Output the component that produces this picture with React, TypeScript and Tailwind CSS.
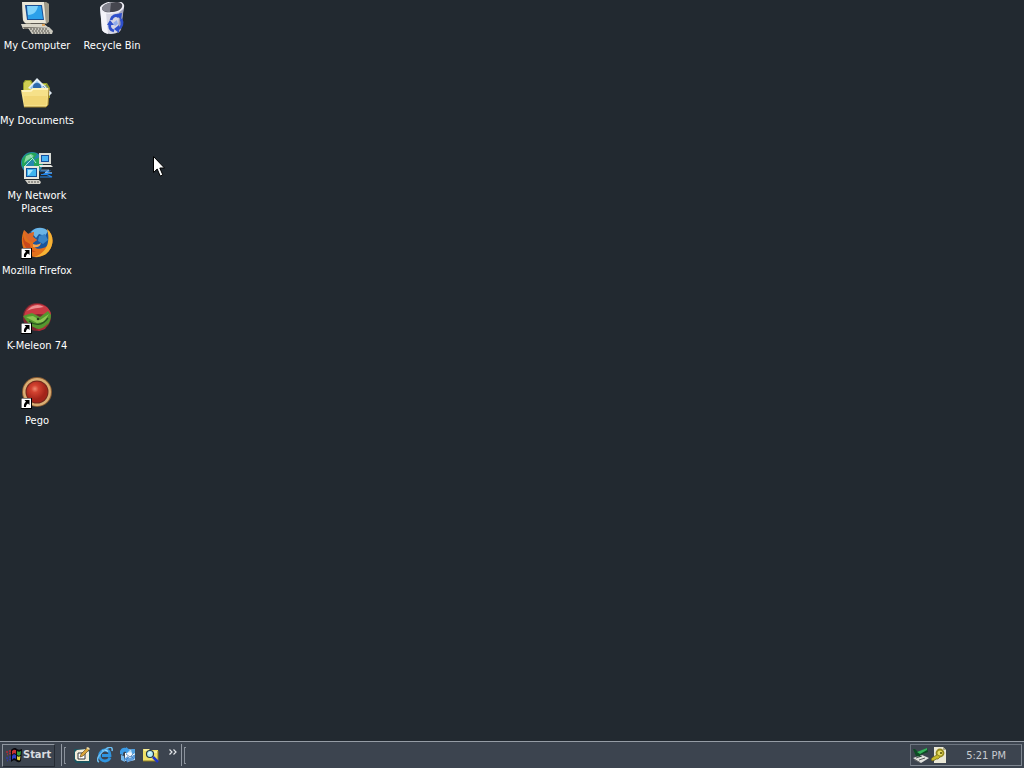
import type { ReactNode } from 'react';

function ShortcutArrow() {
  return (
    <g>
      <path d="M0 21h11v11H0z" fill="#000" />
      <path d="M.5 21.500h9.500v9.500H.5z" fill="#fff" />
      <path d="M3.500 23h5v5L7 26.500c-1.500 1-2 2-2 3.500H3c-.4-2.300.3-3.800 2-5.200z" fill="#000" />
    </g>
  );
}

function ComputerIcon() {
  return (
    <svg viewBox="0 0 32 32" className="h-8 w-8" aria-hidden="true">
      <path d="M1 1l2-2h21l4 3v18l-3 2H5l-3-3z" fill="#8b8878" />
      <path d="M1 0h22l2 21H4L2 18z" fill="#e9e6d8" />
      <path d="M24 0l4 2v17l-3 3z" fill="#a09c8b" />
      <path d="M4 3h17l2 15H6z" fill="#1b4f92" />
      <path d="M6 4h14l2 13H7z" fill="#2ba0ea" />
      <path d="M6 4h11c-1 5-4 9-10 9z" fill="#7fd2fb" />
      <path d="M10 21h12l2 2H9z" fill="#5d5a52" />
      <path d="M0 22h23l4 3v2H2z" fill="#d9d6c9" />
      <path d="M2 25h25v2H3z" fill="#77746b" />
      <path d="M21 23h3" stroke="#e0963c" strokeWidth="1.500" />
      <path d="M7 26l21-1 4 4-1 3H11z" fill="#c9c7bd" />
      <path d="M9 27h18M11 29h18M12 31h18" stroke="#55534d" strokeWidth="1" strokeDasharray="2 1" />
    </svg>
  );
}

function RecycleIcon() {
  return (
    <svg viewBox="0 0 32 32" className="h-8 w-8" aria-hidden="true">
      <path d="M4 5l2 23c3 5 13 5 18 1l4-25z" fill="#d7d7e4" />
      <path d="M4 5l2 23c1 2 3 3 6 4L10 11z" fill="#f4f4fa" />
      <path d="M23 11l5-7-3 24-3 3z" fill="#a2a2bb" />
      <path d="M4 6C4 3 11-1 20-1c6 0 9 3 8 6-1 4-7 6-13 7C9 12 4 10 4 6z" fill="#eeeef5" />
      <path d="M6 6c1-3 7-6 14-6 5 0 7 2 6 5-1 3-6 5-11 5-5 1-9-1-9-4z" fill="#45464f" />
      <path d="M6 6c1-3 5-5 9-5.500L14 10c-5 0-8-1-8-4z" fill="#83848f" />
      <g fill="none" stroke="#2f50cb" strokeWidth="2.800">
        <path d="M15 18c1-4 5-6 8-3" />
        <path d="M25 17c2 4 1 8-3 10" />
        <path d="M18 29c-4-1-5-4-4-7" />
      </g>
      <path d="M20 12l6-1-1 7zM23 23l-5 4 5 4zM11 23l3-5 4 5z" fill="#2f50cb" />
      <path d="M17 21l4-3 1 4-3 2z" fill="#91aceb" />
    </svg>
  );
}

function DocumentsIcon() {
  return (
    <svg viewBox="0 0 32 32" className="h-8 w-8" aria-hidden="true">
      <path d="M2 6l2-3h6l2 3h14l3 5v10H2z" fill="#8f9a2c" />
      <path d="M3 6l2-2h4l2 3h14v12H3z" fill="#cfd052" />
      <path d="M16 1l15 15-4 4L7 11z" fill="#e4eef6" />
      <path d="M16 4l6 6-6 6-7-5z" fill="#8fc0ea" />
      <circle cx="16" cy="10" r="4" fill="#2e68ab" />
      <path d="M22 9l6 7M24 8l5 6" stroke="#6b94bd" />
      <path d="M0 13h9l3-2h16l-1 17-2 2H3z" fill="#f6e189" />
      <path d="M1 14h9l2-2h15" fill="none" stroke="#fff8c9" strokeWidth="1.500" />
      <path d="M3 19h23l-1 9H3z" fill="#efcf68" opacity=".6" />
      <path d="M3 30h22l2-2 1-17" fill="none" stroke="#a2832d" />
    </svg>
  );
}

function NetworkIcon() {
  return (
    <svg viewBox="0 0 32 32" className="h-8 w-8" aria-hidden="true">
      <circle cx="11" cy="11" r="11" fill="#2487ad" />
      <path d="M1 8c3-6 9-9 15-6l-4 6-6 1-2 7-3-2zM13 8l6-3 2 7-5 8-3-5z" fill="#24a55a" />
      <path d="M5 4l5-2 3 2-6 4-4 3z" fill="#87d7a0" />
      <path d="M4 14l8-8M9 3l6 8" stroke="#a8e6e2" strokeWidth="1" />
      <path d="M18 1h12v11H18z" fill="#d9dbd5" />
      <path d="M20 3h8v7h-8z" fill="#164e9b" />
      <path d="M21 4h6v5h-6z" fill="#49b4f5" />
      <path d="M18 13h12l2 2H19z" fill="#e6e5df" />
      <path d="M3 14h15v13H3z" fill="#e7e6dd" />
      <path d="M5 16h11v9H5z" fill="#134d94" />
      <path d="M6 17h9v7H6z" fill="#3eb4ef" />
      <path d="M7 18h5l-4 5H7z" fill="#a5e4ff" />
      <path d="M4 28h14l2 2-1 2H7z" fill="#d2d0c8" />
      <path d="M7 30h11" stroke="#5a5852" strokeDasharray="2 1" />
      <path d="M19 19h9l-4 2.500h7M19 25h12l-5-2.500h-6" fill="none" stroke="#2587ec" strokeWidth="1.200" />
      <path d="M20 18h8l-4 2.500h7" fill="none" stroke="#a8d5ff" strokeWidth=".6" />
    </svg>
  );
}

function FirefoxIcon() {
  return (
    <svg viewBox="0 0 32 32" className="h-8 w-8" aria-hidden="true">
      <circle cx="18" cy="13" r="12" fill="#1b559b" />
      <path d="M10 5c4-5 12-6 17-1l-3 5-6-2-3 4z" fill="#6bb5e6" />
      <path d="M18 9l6-2 3 6-5 4-5-3z" fill="#3a85c6" />
      <path d="M26 2c8 6 7 19-1 25-7 5-17 4-21-3C0 19 0 10 3 3l4 4 6-2-1 5 4 3-4 3c0 5 5 7 10 5 8-2 9-11 4-19z" fill="#e2701b" />
      <path d="M26 2c8 6 7 19-1 25-3 2-8 3-12 3 12-4 17-14 13-28z" fill="#f6b335" />
      <path d="M3 3l4 4 6-2-1 5 4 3-4 2-4-1-3-4z" fill="#d9672a" />
      <path d="M2 9l2 5 5 3c0 4 3 7 6 8-8 1-14-7-13-16z" fill="#c9481c" />
      <path d="M12 17c3 1 5 1 8-1-1 4-4 5-8 4z" fill="#f6a54c" />
      <ShortcutArrow />
    </svg>
  );
}

function KMeleonIcon() {
  return (
    <svg viewBox="0 0 32 32" className="h-8 w-8" aria-hidden="true">
      <circle cx="16" cy="15" r="14" fill="#7b2730" />
      <path d="M3 15C4 4 14-1 24 4c4 2 6 6 6 9l-13-1z" fill="#c93a44" />
      <path d="M6 9c4-6 11-8 17-4-5 1-12 1-17 4z" fill="#ec8f90" />
      <path d="M2 14l9-3 8 4 8-6 3 4c0 6-3 11-8 14-7 1-13-3-18-10z" fill="#55982f" />
      <path d="M5 15l7-1 7 4 9-6-5 8-7 1z" fill="#8cc552" />
      <path d="M8 19c6 5 13 5 19-3" fill="none" stroke="#2c5320" strokeWidth="1.300" />
      <circle cx="17" cy="17" r="1.300" fill="#27401c" />
      <path d="M14 27c5 1 9-1 13-6l-3 6-6 2z" fill="#a82d37" />
      <ShortcutArrow />
    </svg>
  );
}

function PegoIcon() {
  return (
    <svg viewBox="0 0 32 32" className="h-8 w-8" aria-hidden="true">
      <defs>
        <radialGradient id="pego-ball" cx="40%" cy="35%">
          <stop offset="0" stopColor="#ee8a70" />
          <stop offset=".35" stopColor="#d24230" />
          <stop offset="1" stopColor="#a3241a" />
        </radialGradient>
      </defs>
      <circle cx="16" cy="15" r="15" fill="#8a5c33" />
      <circle cx="16" cy="15" r="14" fill="#d9ae74" />
      <circle cx="16" cy="15" r="11.500" fill="#74281c" />
      <circle cx="16" cy="15" r="10.500" fill="url(#pego-ball)" />
      <ShortcutArrow />
    </svg>
  );
}

function WindowsFlag() {
  return (
    <svg viewBox="0 0 16 16" className="h-4 w-4 shrink-0" aria-hidden="true">
      <path d="M5 3c3-3 5-2 6-1s3 1 5 0l-1 12c-2 2-4 1-5 0s-3-1-5 1z" fill="#08080c" />
      <path d="M6 4c2-2 3-1 4-1v4c-1-1-3-1-4 1z" fill="#c93232" />
      <path d="M11 4c1 1 3 1 4 0l-.5 4c-1 1-2 1-3.500 0z" fill="#35a03c" />
      <path d="M6 9c1-2 3-2 4-1v4c-1-1-3-1-4 1z" fill="#2f3fc4" />
      <path d="M11 9c1 1 2 1 3.500 0l-.5 4c-1 1-2 0-3-.5z" fill="#e0d33e" />
      <path d="M0 5h2M3 4h2M1 7.500h1M3 6.500h2" stroke="#b52a34" strokeWidth="1.600" />
      <path d="M0 11h2M3 10h2M1 13.500h1M3 12.500h2" stroke="#3038a8" strokeWidth="1.600" />
    </svg>
  );
}

function ShowDesktopIcon() {
  return (
    <svg viewBox="0 0 16 16" className="h-4 w-4" aria-hidden="true">
      <path d="M0 2h13l3 3v11H2L0 13z" fill="#1c5561" />
      <path d="M3 3l10-1 2 3v9H3L1 12V5z" fill="#f3eedb" />
      <path d="M4 6h7v6H4z" fill="#fff" stroke="#33373b" />
      <path d="M6 10l1-3 6-6 2 2-6 6z" fill="#d9a53a" stroke="#553f18" strokeWidth=".6" />
      <path d="M12 1l2-1 2 2-1 1z" fill="#f0e0ac" />
    </svg>
  );
}

function ExplorerIcon() {
  return (
    <svg viewBox="0 0 16 16" className="h-4 w-4" aria-hidden="true">
      <path d="M13 10.500c-1 2.500-3 3.500-5 3.500-3.500 0-5.500-2.500-5.500-5.500S5 3 8 3c3.500 0 5 2.500 5 5.500H5" fill="none" stroke="#2f95e0" strokeWidth="2.800" />
      <path d="M5 4.500c1-1.500 4.500-1.500 6 0" fill="none" stroke="#97d9ff" strokeWidth="1.200" />
      <path d="M2 15C-2 13 3 6 9 2c4-3 7-2 6 2" fill="none" stroke="#6cbdf0" strokeWidth="1.500" />
    </svg>
  );
}

function OutlookIcon() {
  return (
    <svg viewBox="0 0 16 16" className="h-4 w-4" aria-hidden="true">
      <path d="M7 2l8 1v10l-8 2z" fill="#b9dcf7" />
      <path d="M5 6l9-1v8l-9 1z" fill="#f3f8fd" />
      <path d="M6 7l4 3 4-4M6 13l3-3M14 12l-3-3" fill="none" stroke="#5c89b9" strokeWidth=".9" />
      <path d="M0 4c1-3 4-4 6-3V0l4 3-4 4V5C4 4 3 5 3 8L0 7z" fill="#3c9be6" />
      <path d="M15 8c1 4-3 7-7 6v2l-4-4 4-3v2c3 0 4-1 5-3z" fill="#2f80d2" opacity=".75" />
      <path d="M1 8v5l4 2-1-6z" fill="#73b8ee" />
      <path d="M11 2l4 0v4l-3 1z" fill="#4e9fe0" />
    </svg>
  );
}

function SearchFolderIcon() {
  return (
    <svg viewBox="0 0 16 16" className="h-4 w-4" aria-hidden="true">
      <path d="M0 2h6l1 1h8v11H0z" fill="#efe068" />
      <path d="M1 3h5l1 2h7" fill="none" stroke="#fffbd0" />
      <path d="M0 14h15V4" fill="none" stroke="#8f7e22" />
      <circle cx="7" cy="7" r="3.500" fill="#b5ecf8" stroke="#1f3642" strokeWidth="1.200" />
      <path d="M10 10l5 5" stroke="#2036c8" strokeWidth="2.600" />
      <path d="M5.500 6.500l2-1" stroke="#fff" />
    </svg>
  );
}

function RemoveHardwareIcon() {
  return (
    <svg viewBox="0 0 16 16" className="h-4 w-4" aria-hidden="true">
      <path d="M0 11l9-3 7 3-8 5z" fill="#e0e1dd" />
      <path d="M1 12l6 3v1l-6-3z" fill="#676b6b" />
      <path d="M3 11l6-2M6 13l6-2" stroke="#555a5b" />
      <path d="M0 2h2l3 3 9-4 1 4-8 3 1 2-5-1z" fill="#0d4a24" />
      <path d="M4 5l10-4v2L7 7z" fill="#35b45b" />
    </svg>
  );
}

function UpdateIcon() {
  return (
    <svg viewBox="0 0 16 16" className="h-4 w-4" aria-hidden="true">
      <path d="M3 0h9l3 3v13H3z" fill="#eae8d6" />
      <path d="M12 0v3h3" fill="#a9a788" />
      <circle cx="9" cy="6" r="3.500" fill="#e9df62" stroke="#94881c" strokeWidth="1.800" />
      <path d="M6 8l-4 2-2 2 1 2 3-1 1-1h2l2-2" fill="#c6b92b" stroke="#6e6412" strokeWidth=".7" />
      <path d="M9 5h2v2H9z" fill="#77701f" />
    </svg>
  );
}

function DesktopItem({ label, children }: { label: string; children: ReactNode }) {
  return (
    <button className="flex h-[75px] w-[74px] flex-col items-center gap-[5px] pt-[2px] text-center leading-[13px] text-white">
      {children}
      <span className="w-20">{label}</span>
    </button>
  );
}

const columns = [
  [
    { label: 'My Computer', icon: <ComputerIcon /> },
    { label: 'My Documents', icon: <DocumentsIcon /> },
    { label: 'My Network Places', icon: <NetworkIcon /> },
    { label: 'Mozilla Firefox', icon: <FirefoxIcon /> },
    { label: 'K-Meleon 74', icon: <KMeleonIcon /> },
    { label: 'Pego', icon: <PegoIcon /> },
  ],
  [{ label: 'Recycle Bin', icon: <RecycleIcon /> }],
];

const quickLaunch = [
  { label: 'Show Desktop', icon: <ShowDesktopIcon /> },
  { label: 'Internet Explorer', icon: <ExplorerIcon /> },
  { label: 'Outlook Express', icon: <OutlookIcon /> },
  { label: 'Search', icon: <SearchFolderIcon /> },
];

function Grip() {
  return (
    <div className="flex shrink-0 items-center gap-[2px]" aria-hidden="true">
      <span className="h-[22px] w-px bg-[#9299a3]" />
      <span className="h-[17px] w-[2px] border-y border-l border-[#8a919b]" />
    </div>
  );
}

export default function App() {
  return (
    <div className="flex h-screen flex-col overflow-hidden bg-[#222930] font-['DejaVu_Sans_Condensed','DejaVu_Sans',sans-serif] text-[11px]">
      <main className="relative flex flex-1 gap-px">
        {columns.map((items, i) => (
          <div key={i} className="flex flex-col">
            {items.map((item) => (
              <DesktopItem key={item.label} label={item.label}>
                {item.icon}
              </DesktopItem>
            ))}
          </div>
        ))}

        <svg viewBox="0 0 12 21" className="absolute left-[153px] top-[156px] h-[21px] w-3" aria-hidden="true">
          <path d="M.5.500v16l3.700-3.500 3 7 2.600-1.100-3-6.900h4.700z" fill="#fff" stroke="#000" />
        </svg>
      </main>

      <footer className="flex h-[27px] shrink-0 items-center border-t border-[#969da6] bg-[#3c444f] px-[2px]">
        <button className="flex h-[23px] items-center gap-px border border-t-[#8f969f] border-l-[#8f969f] border-r-[#252b33] border-b-[#252b33] px-[3px] font-bold text-[#d9dce0]">
          <WindowsFlag />
          Start
        </button>

        <div className="ml-[6px] flex items-center">
          <Grip />
          <nav className="ml-2 flex items-center gap-[7px]">
            {quickLaunch.map((item) => (
              <button key={item.label} aria-label={item.label}>
                {item.icon}
              </button>
            ))}
          </nav>
          <button aria-label="More" className="ml-[10px] mr-1 pb-[7px]">
            <svg viewBox="0 0 8 6" className="h-[6px] w-2" aria-hidden="true">
              <path d="M.5.500L3 3 .5 5.500M4.500.500L7 3 4.500 5.500" fill="none" stroke="#e3e5e8" strokeWidth="1.200" />
            </svg>
          </button>
          <Grip />
        </div>

        <div className="ml-auto flex h-[22px] items-center gap-[2px] border border-t-[#6e7681] border-l-[#6e7681] border-r-[#7f8791] border-b-[#7f8791] pl-[2px] pr-[15px] text-[#c8cbd0]">
          <RemoveHardwareIcon />
          <UpdateIcon />
          <time className="ml-[17px] pt-[2px]">5:21 PM</time>
        </div>
      </footer>
    </div>
  );
}
